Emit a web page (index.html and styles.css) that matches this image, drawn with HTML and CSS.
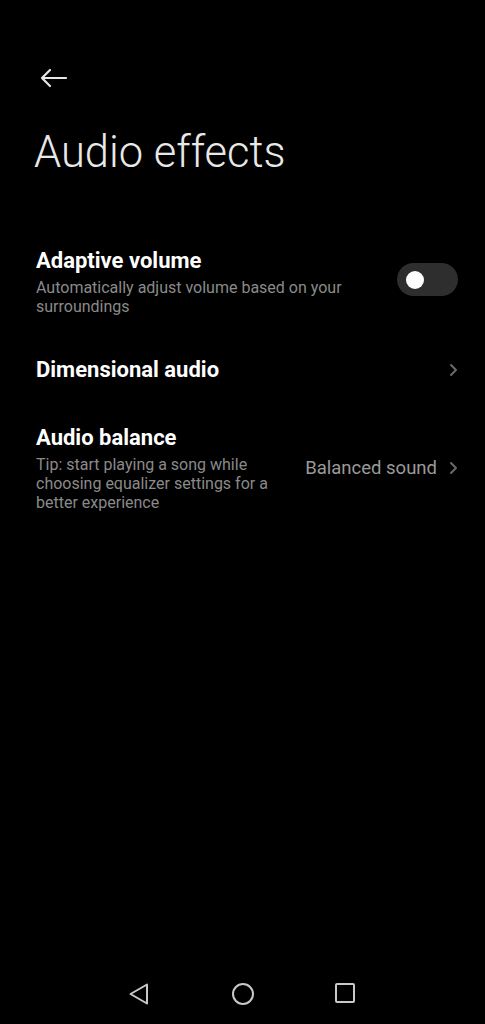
FILE: index.html
```html
<!DOCTYPE html>
<html>
<head>
<meta charset="utf-8">
<link rel="stylesheet" href="styles.css">
</head>
<body>
<div class="screen">
  <header class="header">
    <svg class="back" width="30" height="20" viewBox="0 0 30 20"><path d="M28 10H4M12 2L4 10l8 8" fill="none" stroke="#e6e6e6" stroke-width="2.2" stroke-linecap="round" stroke-linejoin="round"/></svg>
    <h1 class="title">Audio effects</h1>
  </header>
  <main class="list">
    <div class="row row-adaptive">
      <div class="text">
        <div class="row-title">Adaptive volume</div>
        <div class="row-sub">Automatically adjust volume based on your surroundings</div>
      </div>
      <div class="toggle"><div class="knob"></div></div>
    </div>
    <div class="row row-dim">
      <div class="text">
        <div class="row-title">Dimensional audio</div>
      </div>
      <svg class="chev" width="10" height="14" viewBox="0 0 10 14"><path d="M3 2l5 5-5 5" fill="none" stroke="#6a6a6a" stroke-width="2" stroke-linecap="round" stroke-linejoin="round"/></svg>
    </div>
    <div class="row row-bal">
      <div class="text text-bal">
        <div class="row-title">Audio balance</div>
        <div class="row-sub">Tip: start playing a song while choosing equalizer settings for a better experience</div>
      </div>
      <div class="value">Balanced sound</div>
      <svg class="chev" width="10" height="14" viewBox="0 0 10 14"><path d="M3 2l5 5-5 5" fill="none" stroke="#6a6a6a" stroke-width="2" stroke-linecap="round" stroke-linejoin="round"/></svg>
    </div>
  </main>
  <div class="spacer"></div>
  <nav class="navbar">
    <div class="nav-item"><svg width="22" height="24" viewBox="0 0 22 24"><path d="M19 2.5L2.5 12 19 21.5Z" fill="none" stroke="#c8c8c8" stroke-width="2" stroke-linejoin="round"/></svg></div>
    <div class="nav-item"><svg width="24" height="24" viewBox="0 0 24 24"><circle cx="12" cy="12" r="10" fill="none" stroke="#c8c8c8" stroke-width="2"/></svg></div>
    <div class="nav-item nav-recent"><svg width="22" height="22" viewBox="0 0 22 22"><rect x="2" y="2" width="18" height="18" rx="1" fill="none" stroke="#c8c8c8" stroke-width="2"/></svg></div>
  </nav>
</div>
</body>
</html>
```
FILE: styles.css
```css
html, body {
  margin: 0;
  padding: 0;
  background: #000;
}
.screen {
  width: 485px;
  height: 1024px;
  display: flex;
  flex-direction: column;
  font-family: Roboto, "Liberation Sans", sans-serif;
  color: #fff;
}
.header {
  padding: 68px 36px 0 36px;
}
.back {
  display: block;
  margin-left: 2px;
}
.title {
  margin: 40px 0 0 -2px;
  font-weight: 300;
  font-size: 43.5px;
  line-height: 50px;
  color: #e8e8e8;
  letter-spacing: 0;
}
.list {
  margin-top: 70px;
  padding: 0 27px 0 36px;
}
.row {
  display: flex;
  align-items: center;
}
.text {
  flex: 1;
}
.row-title {
  font-weight: 700;
  font-size: 22px;
  line-height: 26px;
  color: #fff;
}
.row-sub {
  font-size: 16px;
  line-height: 19px;
  color: #8a8a8a;
  margin-top: 4px;
}
.row-adaptive .row-sub {
  max-width: 330px;
}
.toggle {
  width: 61px;
  height: 33px;
  border-radius: 17px;
  background: #2e2e2e;
  display: flex;
  align-items: center;
  padding-left: 9px;
  box-sizing: border-box;
  margin-bottom: 5px;
}
.knob {
  width: 18px;
  height: 18px;
  border-radius: 50%;
  background: #fff;
}
.row-dim {
  margin-top: 41px;
}
.row-bal {
  margin-top: 42px;
  align-items: flex-start;
}
.text-bal .row-sub {
  max-width: 250px;
}
.value {
  font-size: 18.5px;
  line-height: 22px;
  color: #9a9a9a;
  margin-right: 11px;
  margin-top: 32px;
}
.row-bal .chev {
  margin-top: 36px;
}
.spacer {
  flex: 1;
}
.navbar {
  height: 60px;
  display: flex;
  justify-content: center;
  align-items: flex-start;
  padding-top: 18px;
  box-sizing: border-box;
}
.nav-item {
  width: 104px;
  display: flex;
  justify-content: center;
}
.nav-recent {
  padding-right: 4px;
  box-sizing: border-box;
}
.nav-item svg {
  display: block;
}
```
